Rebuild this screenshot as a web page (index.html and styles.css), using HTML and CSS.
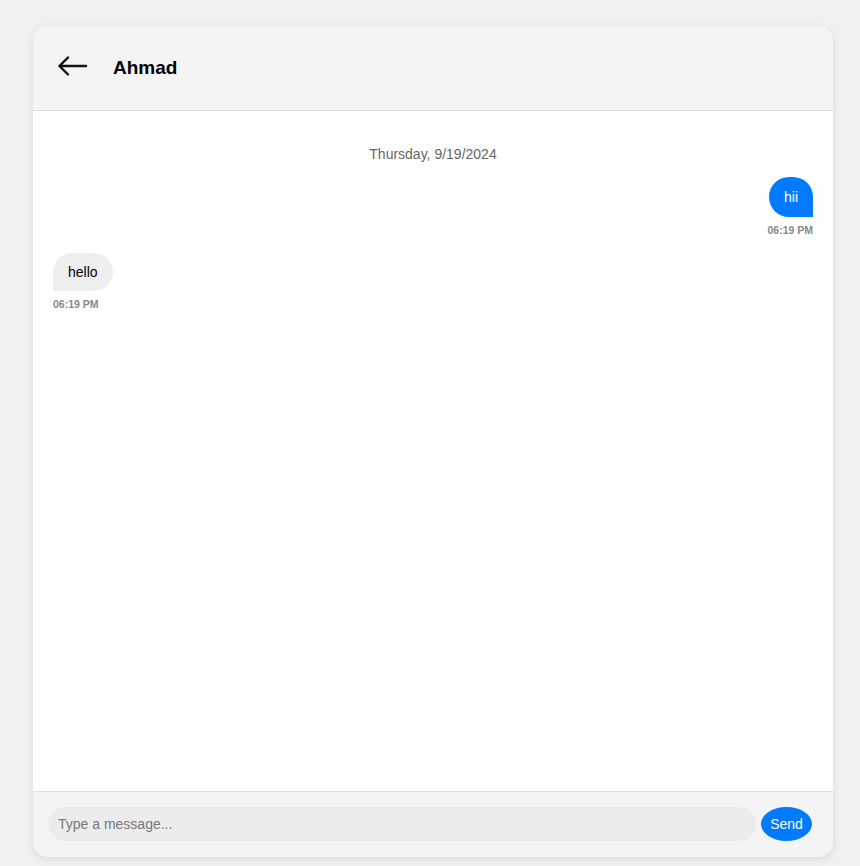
FILE: index.html
```html
<!DOCTYPE html>
<html>
<head>
<meta charset="utf-8">
<link rel="stylesheet" href="styles.css">
</head>
<body>
<div class="chat">
  <header class="chat-header">
    <button class="back" aria-label="Back">
      <svg width="30" height="22" viewBox="0 0 30 22" fill="none" stroke="#111" stroke-width="2.4" stroke-linecap="round" stroke-linejoin="round"><path d="M28 10H2"/><path d="M10 1.5L1.5 10L10 18.5"/></svg>
    </button>
    <h1 class="name">Ahmad</h1>
  </header>
  <main class="messages">
    <div class="date">Thursday, 9/19/2024</div>
    <div class="msg sent">
      <div class="bubble">hii</div>
      <div class="time">06:19 PM</div>
    </div>
    <div class="msg received">
      <div class="bubble">hello</div>
      <div class="time">06:19 PM</div>
    </div>
  </main>
  <footer class="composer">
    <input class="input" type="text" placeholder="Type a message..." autofocus>
    <button class="send">Send</button>
  </footer>
</div>
</body>
</html>
```
FILE: styles.css
```css
* { box-sizing: border-box; }
html, body { margin: 0; padding: 0; }
body {
  background: #f1f1f1;
  font-family: "Liberation Sans", Arial, sans-serif;
  height: 866px;
  overflow: hidden;
}
.chat {
  width: 800px;
  height: 831px;
  margin: 26px 0 0 33px;
  background: #fff;
  border-radius: 15px;
  overflow: hidden;
  display: flex;
  flex-direction: column;
  box-shadow: 0 2px 8px rgba(0,0,0,0.1);
}
.chat-header {
  height: 85px;
  flex: none;
  display: flex;
  align-items: center;
  background: #f4f4f4;
  border-bottom: 1px solid #ddd;
  padding-left: 25px;
}
.back {
  border: 0;
  background: none;
  padding: 0;
  width: 30px;
  height: 22px;
  display: flex;
  margin-top: -2px;
  cursor: pointer;
}
.name {
  margin: 0 0 0 25px;
  font-size: 19px;
  font-weight: bold;
  color: #000;
}
.messages {
  flex: 1;
  padding: 20px;
  display: flex;
  flex-direction: column;
}
.date {
  text-align: center;
  color: #666;
  font-size: 14px;
  line-height: 16px;
  margin: 15px 0;
}
.msg {
  display: flex;
  flex-direction: column;
  margin-bottom: 16px;
}
.msg.sent { align-items: flex-end; }
.msg.received { align-items: flex-start; }
.bubble {
  font-size: 14px;
  line-height: 18px;
  padding: 10px 15px;
  border-radius: 20px;
}
.sent .bubble {
  background: #007bff;
  color: #fff;
  border-bottom-right-radius: 0;
  padding-top: 11px;
  padding-bottom: 11px;
}
.received .bubble {
  background: #efefef;
  color: #000;
  border-bottom-left-radius: 0;
}
.time {
  font-size: 10.5px;
  font-weight: bold;
  color: #888;
  margin-top: 7px;
  line-height: 13px;
}
.composer {
  flex: none;
  height: 66px;
  background: #f4f4f4;
  border-top: 1px solid #ddd;
  display: flex;
  align-items: flex-start;
  padding: 15px 21px 0 15px;
  gap: 5px;
}
.input {
  flex: 1;
  height: 34px;
  border: 0;
  outline: none;
  background: #ececec;
  border-radius: 17px;
  padding: 0 10px;
  font-family: "Liberation Sans", Arial, sans-serif;
  font-size: 14px;
  color: #000;
}
.input::placeholder { color: #777; }
.send {
  height: 34px;
  width: 51px;
  border: 0;
  border-radius: 50%;
  background: #007bff;
  color: #fff;
  font-family: "Liberation Sans", Arial, sans-serif;
  font-size: 14px;
  padding: 0;
  cursor: pointer;
}
```
